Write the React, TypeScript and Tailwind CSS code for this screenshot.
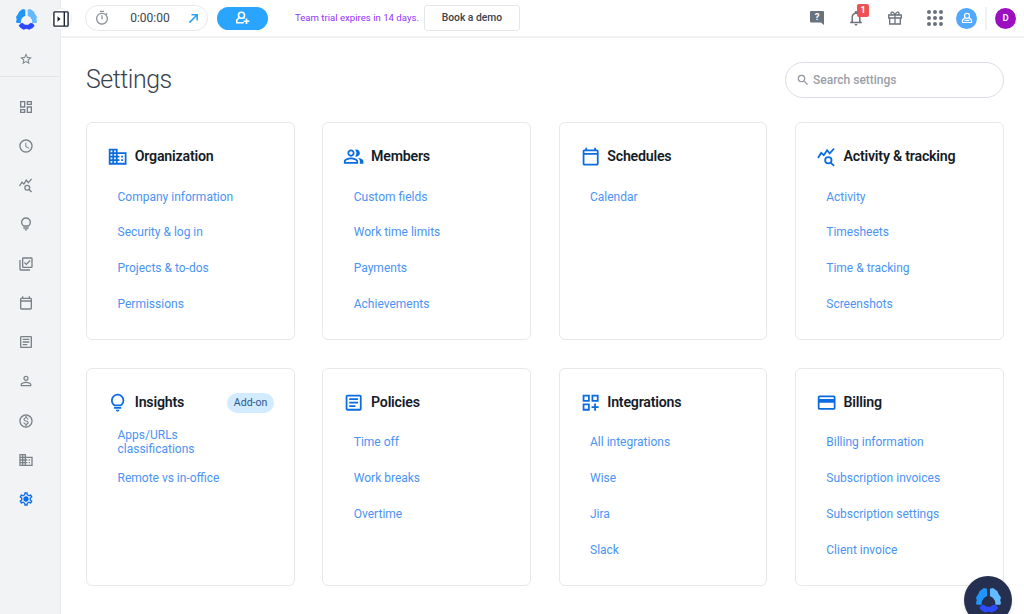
import React from 'react'
import {
    MdBusiness,
    MdCreditCard,
    MdNotificationsNone,
    MdOutlineArticle,
    MdOutlineDashboard,
    MdOutlineDashboardCustomize,
    MdOutlineLibraryAddCheck,
    MdOutlineMonetizationOn,
    MdOutlinePeopleAlt,
    MdOutlineSettings,
    MdOutlineTimer,
    MdPersonOutline,
    MdSchedule,
    MdSearch,
    MdStarOutline,
} from 'react-icons/md';

interface IconProps {
    className?: string;
}

interface Section {
    title: string;
    icon: React.ComponentType<IconProps>;
    links: string[];
    badge?: string;
}

const BulbIcon = ({ className }: IconProps) => (
    <svg viewBox="0 0 24 24" className={className} fill="currentColor">
        <path d="M12 22q-.825 0-1.412-.587T10 20h4q0 .825-.587 1.413T12 22m-4-3v-2h8v2zm.25-3q-1.725-1.025-2.738-2.750T4.500 9.500q0-3.125 2.188-5.312T12 2t5.313 2.188T19.500 9.500q0 2.025-1.012 3.750T15.750 16zm.6-2h6.300q1.125-.8 1.738-1.975T17.500 9.500q0-2.300-1.600-3.900T12 4T8.100 5.600T6.500 9.500q0 1.350.613 2.525T8.850 14" />
    </svg>
)

const CalendarIcon = ({ className }: IconProps) => (
    <svg viewBox="0 0 24 24" className={className} fill="currentColor">
        <path d="M19 4h-1V2h-2v2H8V2H6v2H5c-1.110 0-2 .9-2 2v14c0 1.100.89 2 2 2h14c1.100 0 2-.9 2-2V6c0-1.100-.9-2-2-2zm0 16H5V10h14v10zm0-12H5V6h14v2z" />
    </svg>
)

const StatsIcon = ({ className }: IconProps) => (
    <svg viewBox="0 0 24 24" className={className} fill="none" stroke="currentColor" strokeWidth="2">
        <path d="M2.300 13.500l3.500-5.700 3 2.600 3.700-5.700 3 3.700 4.900-5.600M16.500 18.700l3.900 3.800" />
        <circle cx="13.900" cy="16.100" r="3.600" />
    </svg>
)

const navIcons: React.ComponentType<IconProps>[] = [
    MdOutlineDashboard,
    MdSchedule,
    StatsIcon,
    BulbIcon,
    MdOutlineLibraryAddCheck,
    CalendarIcon,
    MdOutlineArticle,
    MdPersonOutline,
    MdOutlineMonetizationOn,
    MdBusiness,
]

const sections: Section[] = [
    { title: "Organization", icon: MdBusiness, links: ["Company information", "Security & log in", "Projects & to-dos", "Permissions"] },
    { title: "Members", icon: MdOutlinePeopleAlt, links: ["Custom fields", "Work time limits", "Payments", "Achievements"] },
    { title: "Schedules", icon: CalendarIcon, links: ["Calendar"] },
    { title: "Activity & tracking", icon: StatsIcon, links: ["Activity", "Timesheets", "Time & tracking", "Screenshots"] },
    { title: "Insights", icon: BulbIcon, links: ["Apps/URLs classifications", "Remote vs in-office"], badge: "Add-on" },
    { title: "Policies", icon: MdOutlineArticle, links: ["Time off", "Work breaks", "Overtime"] },
    { title: "Integrations", icon: MdOutlineDashboardCustomize, links: ["All integrations", "Wise", "Jira", "Slack"] },
    { title: "Billing", icon: MdCreditCard, links: ["Billing information", "Subscription invoices", "Subscription settings", "Client invoice"] },
]

const Logo = ({ className }: IconProps) => (
    <svg viewBox="0 0 63 63" className={className}>
        <path fill="#2196f9" d="M0 24L6 15 9 8 20 0 28 2V20L20 25 15 33 14 42H2L0 38 2 31z" />
        <path fill="#64b9ff" d="M63 24L57 15 54 8 43 0 35 2V20L43 25 48 33 49 42H61L63 38 61 31z" />
        <path fill="#2a4bff" d="M8 50L14 43 20 42 27 47H37L43 42 50 43 56 50 50 57 40 62 31.500 59.500 23 62 14 57z" />
    </svg>
)

const Sidebar = () => (
    <aside className="flex w-[61px] shrink-0 flex-col border-r border-[#e9ebed] bg-[#f1f3f5] text-[#7b8189]">
        <div className="flex h-[38px] items-center pl-4 pt-[1px]">
            <Logo className="size-[21px]" />
        </div>
        <div className="flex h-[39px] items-center border-b border-[#e4e7ea] pl-[19px] pt-1">
            <MdStarOutline className="size-[14px]" />
        </div>
        <nav className="flex flex-col pl-[18px] pt-[10px]">
            {navIcons.map((Icon, i) => (
                <div key={i} className="flex h-[39.250px] items-center">
                    <Icon className="size-4" />
                </div>
            ))}
            <div className="flex h-[39.250px] items-center text-[#0d6fe8]">
                <svg viewBox="0 0 24 24" className="size-4" fill="currentColor">
                    <MdOutlineSettings size={24} />
                    <circle cx="12" cy="12" r="3.500" />
                </svg>
            </div>
        </nav>
    </aside>
)

const Header = () => (
    <header className="flex h-[38px] shrink-0 items-center border-b-2 border-[#f0f1f2] pl-6 pr-2">
        <div className="flex h-[26px] w-[123px] items-center justify-between rounded-full border border-[#e6e8ea] pl-[8px] pr-[8px] text-[12px] text-[#3a4350]">
            <MdOutlineTimer className="size-4 text-[#8e949c]" />
            <span className="pl-[2px]">0:00:00</span>
            <svg viewBox="0 0 12 12" className="size-[11px]" fill="none" stroke="#2aa0f8" strokeWidth="1.700">
                <path d="M1.500 10.500L9.500 2.500M3.800 2h6.200v6.200" />
            </svg>
        </div>
        <div className="ml-[9px] flex h-[23px] w-[51px] items-center justify-center rounded-full bg-[#2aa5ff]">
            <svg viewBox="0 0 16 14" className="h-[14px] w-4" fill="none" stroke="#fff" strokeWidth="1.600">
                <circle cx="6.500" cy="4.300" r="3" />
                <path d="M4.300 6.600L1.800 9v2.800h7M8.600 6.600l1 .9M11.500 7.500v5.600M8.700 10.300h5.600" />
            </svg>
        </div>
        <span className="ml-[27px] whitespace-nowrap text-[9.600px] text-[#9333ff]">Team trial expires in 14 days.</span>
        <div className="ml-[5px] flex h-[26px] w-[96px] items-center justify-center rounded-[3px] border border-[#e4e6e8] text-[10.300px] font-medium text-[#39424e]">
            Book a demo
        </div>

        <div className="ml-auto flex items-center text-[#6a727d]">
            <svg viewBox="0 0 14 14" className="size-[14px]">
                <path fill="#6a727d" d="M1 0h12q1 0 1 1v13l-3-2.500H1q-1 0-1-1V1q0-1 1-1z" />
                <text x="7" y="9.300" textAnchor="middle" fill="#fff" fontSize="9.500" fontWeight="700" fontFamily="Roboto">?</text>
            </svg>
            <div className="relative ml-[23px]">
                <MdNotificationsNone className="size-[18px]" />
                <span className="absolute -top-[5px] left-[10px] flex h-[13px] w-3 items-center justify-center rounded-[2px] bg-[#ef5053] text-[9px] font-bold text-white">1</span>
            </div>
            <svg viewBox="0 0 14 14" className="ml-[23px] size-[14px]" fill="none" stroke="#6a727d" strokeWidth="1.300">
                <path d="M.7 4h12.600v3H.7zM1.700 7v6h10.600V7M7 4v9M7 4C6 1 3 0 3 2.500 3 4 5 4 7 4zM7 4c1-3 4-4 4-1.500C11 4 9 4 7 4z" />
            </svg>
            <svg viewBox="0 0 16 16" className="ml-[25px] size-4" fill="#6a727d">
                {[2, 8, 14].map(y => [2, 8, 14].map(x => <circle key={`${x}-${y}`} cx={x} cy={y} r="2" />))}
            </svg>
            <div className="ml-[13px] flex size-[21px] items-center justify-center rounded-full bg-[#51a8fd]">
                <svg viewBox="0 0 12 12" className="size-3" fill="none" stroke="#fff" strokeWidth="1.200">
                    <circle cx="6" cy="3.800" r="2.500" />
                    <path d="M4.200 5.500L1.500 8v2.500h9V8L7.800 5.500M3.500 8.400h5" />
                </svg>
            </div>
            <div className="ml-2 h-[23px] w-[2px] bg-[#f0f1f2]" />
            <div className="ml-2 flex size-[21px] items-center justify-center rounded-full bg-[#9b0fc0] text-[9.500px] font-semibold text-white">D</div>
        </div>
    </header>
)

const SettingsCard = ({ title, icon: Icon, links, badge }: Section) => (
    <div className="h-[218px] rounded-[6px] border border-[#e6e8ea] pl-5 pr-5 pt-[22px]">
        <div className="flex h-6 items-center">
            <Icon className="size-[21.300px] shrink-0 text-[#0a6ce0]" />
            <h2 className="ml-[6.500px] whitespace-nowrap text-[14.200px] font-semibold tracking-[-0.22px] text-[#151c28]">{title}</h2>
            {badge && <span className="ml-auto rounded-full bg-[#d3ebff] px-[6.500px] text-[10.500px] leading-5 text-[#24588f]">{badge}</span>}
        </div>
        <ul className="ml-[10.500px] mt-[9.700px]">
            {links.map(link => (
                <li key={link} className="flex h-[35.850px] items-center">
                    <a className="max-w-[120px] text-[12px] leading-[14.200px] text-[#4a93f5]">{link}</a>
                </li>
            ))}
        </ul>
    </div>
)

const App = () => {
    return (
        <div className="relative flex h-[614px] w-[1024px] overflow-hidden bg-white font-['Roboto',sans-serif]">
            <Sidebar />
            <div className="flex min-w-0 flex-1 flex-col">
                <Header />
                <main className="pl-[25px] pr-[20.500px]">
                    <div className="flex h-[84px] items-center justify-between">
                        <h1 className="text-[24.900px] font-light tracking-[-0.450px] text-[#39424f]">Settings</h1>
                        <div className="flex h-9 w-[219px] items-center rounded-full border border-[#dcdde4] pl-[10px] text-[12px] font-medium text-[#9ba0a8]">
                            <MdSearch className="mr-[3.500px] size-[14px] text-[#8e949c]" />
                            Search settings
                        </div>
                    </div>
                    <div className="grid grid-cols-4 gap-x-[27.500px] gap-y-[27.500px]">
                        {sections.map(section => <SettingsCard key={section.title} {...section} />)}
                    </div>
                </main>
            </div>

            {/* sidebar toggle */}
            <div className="absolute left-[50px] top-[8px] flex size-[22px] items-center justify-center rounded-full border border-[#eceef0] bg-white">
                <svg viewBox="0 0 16 16" className="size-4" fill="none" stroke="#1c2433" strokeWidth="1.400">
                    <rect x=".9" y=".9" width="14.200" height="14.200" rx=".8" />
                    <path d="M11.300 1v14" />
                    <path d="M4.500 5.300v5.400L7.500 8z" fill="#1c2433" stroke="none" />
                </svg>
            </div>

            {/* chat launcher */}
            <div className="absolute left-[964px] top-[576px] flex size-12 items-center justify-center rounded-full bg-[#252f4f] shadow-md">
                <Logo className="size-[25px]" />
            </div>
        </div>
    )
}

export default App
